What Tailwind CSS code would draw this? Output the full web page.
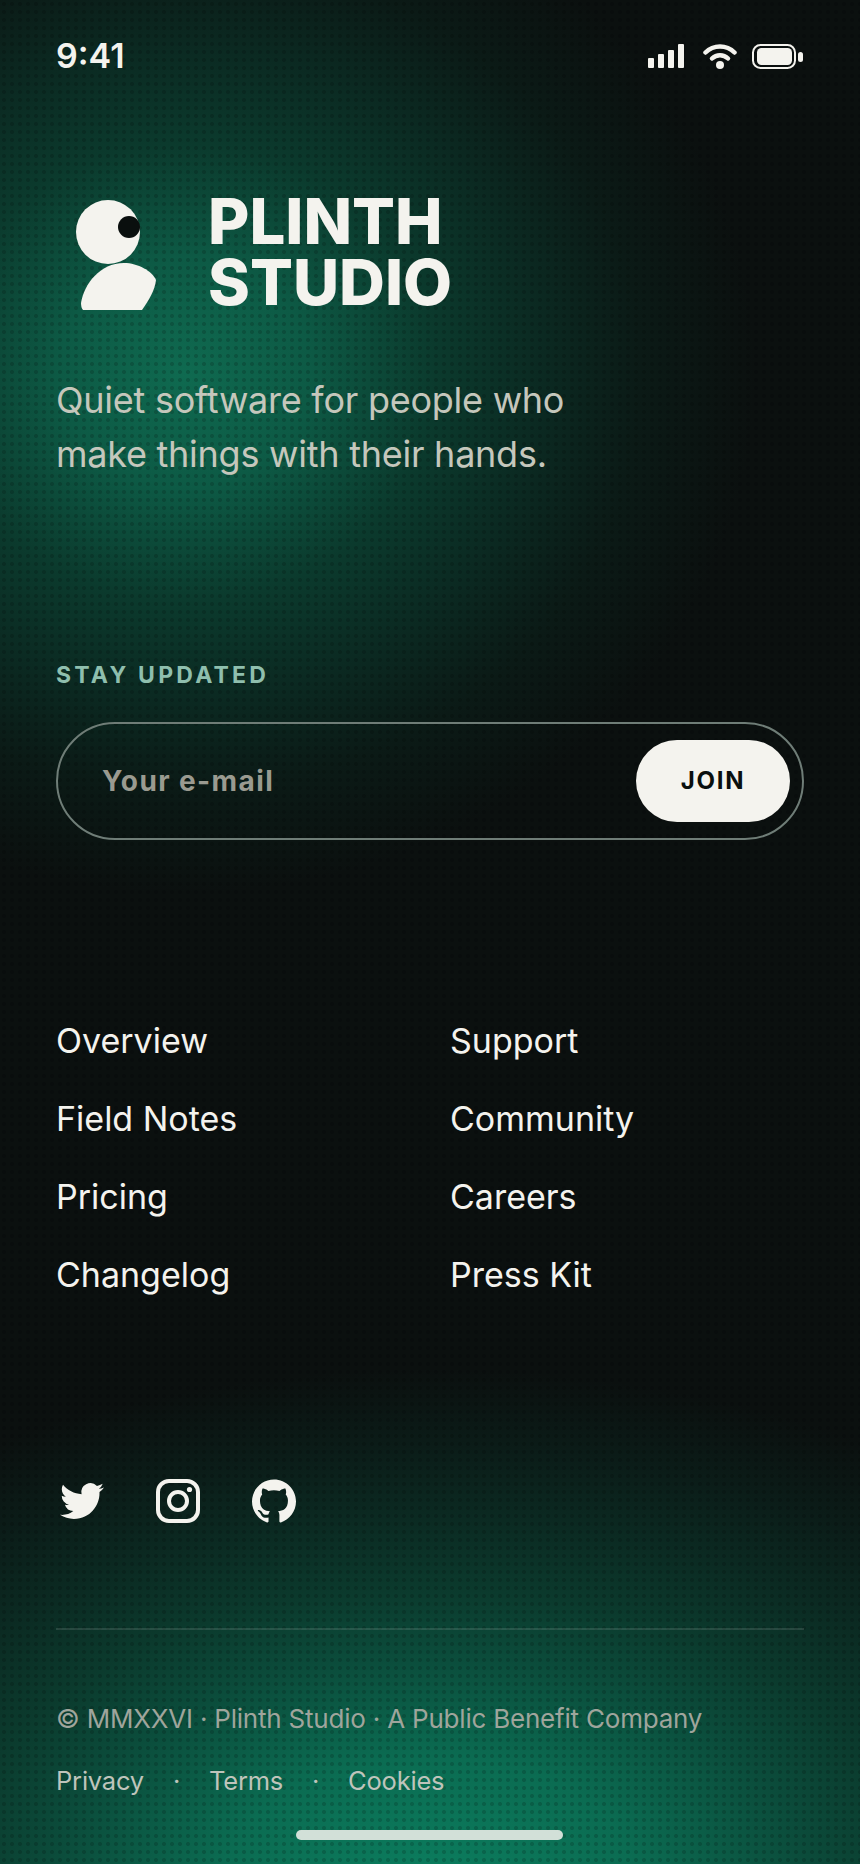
<!DOCTYPE html>
<html lang="en">

<head>
  <meta charset="UTF-8">
  <meta name="viewport" content="width=device-width, initial-scale=1.0">
  <title>Plinth Studio</title>
  <script src="https://cdn.jsdelivr.net/npm/@tailwindcss/browser@4"></script>
</head>

<body class="bg-[#0b100f]">
  <div class="relative w-[860px] h-[1864px] overflow-hidden font-['Inter',sans-serif] text-[#f4f3ee] bg-[#0b100f] bg-[radial-gradient(ellipse_570px_520px_at_185px_373px,#0f6a50_0%,#0d5a45_22%,#0b3a2d_44%,#0b2a22_62%,#0a1a16_80%,#0b100f_100%),radial-gradient(ellipse_850px_510px_at_430px_1880px,#0a7d5e_0%,#0a6c52_24%,#0a4c3b_44%,#0b3a2d_57%,#0b2a22_71%,#0a1c18_85%,#0b100f_100%)] [background-blend-mode:lighten]">
    <!-- dot texture over the glow -->
    <div class="absolute inset-0 pointer-events-none bg-[radial-gradient(circle,rgba(0,0,0,0.16)_1.6px,transparent_2.4px)] bg-[size:8px_8px]"></div>

    <div class="relative flex flex-col h-full px-[56px]">
      <!-- Status bar -->
      <div class="flex items-center justify-between h-[40px] mt-[36px]">
        <span class="text-[34px] font-semibold leading-none">9:41</span>
        <div class="flex items-center gap-[15px] mr-[1px]">
          <svg class="mr-[4px]" width="36" height="24" viewBox="0 0 36 24" fill="#f4f3ee">
            <rect x="0" y="14" width="6" height="10" rx="1" />
            <rect x="10" y="10" width="6" height="14" rx="1" />
            <rect x="20" y="6" width="6" height="18" rx="1" />
            <rect x="30" y="0" width="6" height="24" rx="1" />
          </svg>
          <svg width="34" height="25" viewBox="0 0 34 25" fill="none" stroke="#f4f3ee" stroke-width="4.5" stroke-linecap="round">
            <path d="M2.5 8.5C10.5 .5 23.5 .5 31.5 8.5" />
            <path d="M9 14.5C13.5 10 20.5 10 25 14.5" />
            <circle cx="17" cy="21" r="4" fill="#f4f3ee" stroke="none" />
          </svg>
          <svg width="51" height="25" viewBox="0 0 51 25" fill="none">
            <rect x="1" y="1" width="42" height="23" rx="7.5" stroke="#f4f3ee" stroke-width="2" />
            <rect x="5" y="4" width="35" height="17" rx="4.5" fill="#f4f3ee" />
            <rect x="46" y="8" width="5" height="10" rx="2.5" fill="#f4f3ee" />
          </svg>
        </div>
      </div>

      <!-- Brand -->
      <div class="flex items-start gap-[52px] mt-[124px]">
        <svg class="ml-[20px] shrink-0" width="80" height="110" viewBox="0 0 80 110">
          <path fill="#f4f3ee" d="M5 103C8 84 24 63 48 63C62 63 76 71 80 80C79 90 73 100 66 110H7Q5 108 5 103Z" />
          <circle cx="32" cy="32" r="32" fill="#f4f3ee" />
          <circle cx="53" cy="27" r="11" fill="#0a0f0e" />
        </svg>
        <h1 class="-mt-[10px] text-[63.5px] font-extrabold leading-[61px]">PLINTH<br>STUDIO</h1>
      </div>

      <p class="mt-[61px] text-[36px] leading-[54px] tracking-[-0.007em] text-[#c5c7bc]">Quiet software for people who<br>make things with their hands.</p>

      <!-- Signup -->
      <h2 class="mt-[180px] text-[23px] leading-[28px] font-bold tracking-[0.14em] text-[#8fbfae]">STAY UPDATED</h2>
      <div class="mt-[33px] flex items-center justify-between h-[118px] rounded-full border-2 border-[#6f7d77] pl-[44px] pr-[12px]">
        <span class="text-[28px] font-bold tracking-[0.05em] text-[#9a9a90]">Your e-mail</span>
        <button class="w-[154px] h-[82px] rounded-full bg-[#f4f3ee] text-[#0a0f0e] text-[24px] font-bold tracking-[0.07em]">JOIN</button>
      </div>

      <!-- Links -->
      <div class="mt-[177px] grid grid-cols-[394px_1fr] gap-y-[30px] text-[34px] leading-[48px]">
        <a>Overview</a><a>Support</a>
        <a>Field Notes</a><a>Community</a>
        <a>Pricing</a><a>Careers</a>
        <a>Changelog</a><a>Press Kit</a>
      </div>

      <!-- Social -->
      <div class="mt-[180px] flex items-center gap-[52px] pl-[4px]">
        <svg width="44" height="44" viewBox="0 0 24 24" fill="#f4f3ee"><path d="M23.953 4.57a10 10 0 01-2.825.775 4.958 4.958 0 002.163-2.723c-.951.555-2.005.959-3.127 1.184a4.92 4.92 0 00-8.384 4.482C7.69 8.095 4.067 6.13 1.64 3.162a4.822 4.822 0 00-.666 2.475c0 1.71.87 3.213 2.188 4.096a4.904 4.904 0 01-2.228-.616v.06a4.923 4.923 0 003.946 4.827 4.996 4.996 0 01-2.212.085 4.936 4.936 0 004.604 3.417 9.867 9.867 0 01-6.102 2.105c-.39 0-.779-.023-1.17-.067a13.995 13.995 0 007.557 2.209c9.053 0 13.998-7.496 13.998-13.985 0-.21 0-.42-.015-.63A9.935 9.935 0 0024 4.59z" /></svg>
        <svg width="44" height="44" viewBox="0 0 44 44" fill="none" stroke="#f4f3ee" stroke-width="4">
          <rect x="2" y="2" width="40" height="40" rx="11" />
          <circle cx="22" cy="22" r="9" />
          <circle cx="33.5" cy="10.5" r="2.6" fill="#f4f3ee" stroke="none" />
        </svg>
        <svg width="44" height="44" viewBox="0 0 24 24" fill="#f4f3ee"><path d="M12 .297c-6.63 0-12 5.373-12 12 0 5.303 3.438 9.8 8.205 11.385.6.113.82-.258.82-.577 0-.285-.01-1.04-.015-2.04-3.338.724-4.042-1.61-4.042-1.61C4.422 18.07 3.633 17.7 3.633 17.7c-1.087-.744.084-.729.084-.729 1.205.084 1.838 1.236 1.838 1.236 1.07 1.835 2.809 1.305 3.495.998.108-.776.417-1.305.76-1.605-2.665-.3-5.466-1.332-5.466-5.93 0-1.31.465-2.38 1.235-3.22-.135-.303-.54-1.523.105-3.176 0 0 1.005-.322 3.3 1.23.96-.267 1.98-.399 3-.405 1.02.006 2.04.138 3 .405 2.28-1.552 3.285-1.23 3.285-1.23.645 1.653.24 2.873.12 3.176.765.84 1.23 1.91 1.23 3.22 0 4.61-2.805 5.625-5.475 5.92.42.36.81 1.096.81 2.22 0 1.606-.015 2.896-.015 3.286 0 .315.21.69.825.57C20.565 22.092 24 17.592 24 12.297c0-6.627-5.373-12-12-12" /></svg>
      </div>

      <div class="mt-[105px] h-[2px] bg-white/12"></div>

      <!-- Legal -->
      <p class="mt-[71px] text-[26px] leading-[36px] tracking-[-0.008em] text-[#9fa59c]">© MMXXVI · Plinth Studio · A Public Benefit Company</p>
      <div class="mt-[26px] flex items-center text-[25.5px] leading-[36px] tracking-[-0.008em] text-[#bfc4bb]">
        <a>Privacy</a><span class="w-[65px] text-center">·</span><a>Terms</a><span class="w-[65px] text-center">·</span><a>Cookies</a>
      </div>
    </div>

    <!-- Home indicator -->
    <div class="absolute left-[296px] top-[1830px] w-[267px] h-[10px] rounded-full bg-[#d2e0d8]"></div>
  </div>
</body>

</html>
